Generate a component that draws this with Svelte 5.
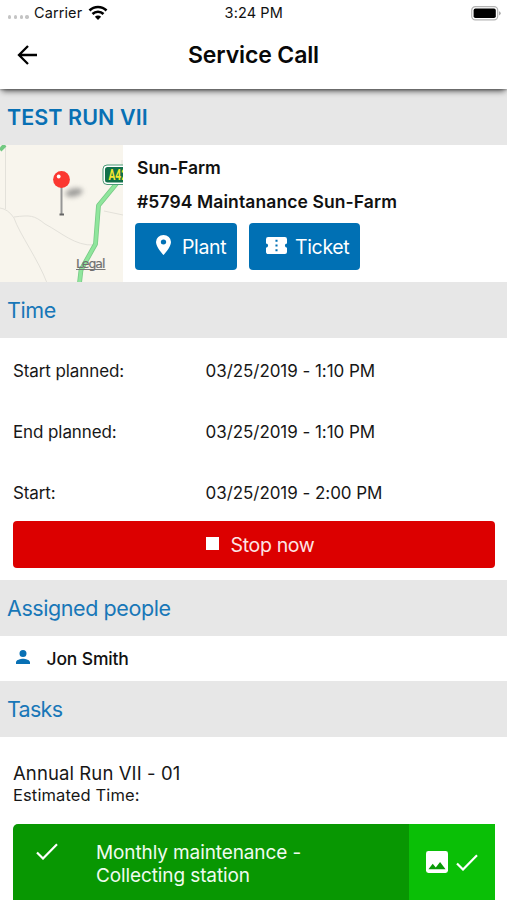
<script>
  const times = [
    { label: 'Start planned:', value: '03/25/2019 - 1:10 PM' },
    { label: 'End planned:', value: '03/25/2019 - 1:10 PM' },
    { label: 'Start:', value: '03/25/2019 - 2:00 PM' }
  ];
</script>

<main class="screen">
  <header class="top">
    <div class="status">
      <div class="carrier">
        <span class="dots"><i></i><i></i><i></i><i></i></span>
        <span class="carrier-name">Carrier</span>
        <svg class="wifi" width="20" height="16" viewBox="0 0 20 16">
          <path d="M1.5 5.5a12 12 0 0 1 17 0M4.5 9a7.8 7.8 0 0 1 11 0" fill="none" stroke="#000" stroke-width="2.6" />
          <path d="M6.9 11.7a4.3 4.3 0 0 1 6.2 0L10 15z" />
        </svg>
      </div>
      <span class="clock">3:24 PM</span>
      <svg class="battery" width="30" height="15" viewBox="0 0 30 15">
        <rect x=".7" y=".7" width="26" height="13.2" rx="3.6" fill="#fff" stroke="#b4b4b4" stroke-width="1.2" />
        <rect x="2.6" y="2.6" width="22.2" height="9.4" rx="1.8" />
        <path d="M28.2 5.2q1.4.6 1.4 2.1t-1.4 2.1z" fill="#999" />
      </svg>
    </div>
    <div class="nav">
      <svg class="back" width="22" height="20" viewBox="0 0 22 20">
        <path d="M11 1L2 10l9 9M2.2 10H20" fill="none" stroke="#000" stroke-width="2.3" />
      </svg>
      <h1>Service Call</h1>
    </div>
  </header>

  <h2 class="run">TEST RUN VII</h2>
  <section class="plant">
    <svg class="map" width="123" height="137" viewBox="0 0 123 137">
      <defs>
        <filter id="soft" x="-50%" y="-100%" width="200%" height="300%"><feGaussianBlur stdDeviation="2.6" /></filter>
      </defs>
      <rect width="123" height="138" fill="#f8f5ed" />
      <g fill="none" stroke="#e3e1da" stroke-width="1">
        <path d="M5.500 0V64M0 63Q8 64 14 73C20 90 38 114 47 138" />
        <path d="M14 72C30 70 34 70 45 79C62 88 75 101 94 100M104 66L123 70M122 15V20" />
      </g>
      <path d="M0 5L5 0" stroke="#72c982" stroke-width="4" />
      <path d="M117 38L98.500 60.500L95.500 99L81 125L79.500 138" fill="none" stroke="#79ca87" stroke-width="4.800" stroke-linejoin="round" />
      <path d="M117 38L98.500 60.500L95.500 99L81 125L79.500 138" fill="none" stroke="#8fe69c" stroke-width="3.200" stroke-linejoin="round" />
      <rect x="103" y="20" width="34" height="19.500" rx="4" fill="#fff" stroke="#4b9a77" stroke-width="1" />
      <rect x="105" y="22" width="32" height="15.500" rx="2.500" fill="#11704a" />
      <text x="108.500" y="34.500" class="road" textLength="18.500" lengthAdjust="spacingAndGlyphs">A42</text>
      <ellipse cx="74" cy="47.500" rx="9" ry="4" fill="#777" opacity=".7" filter="url(#soft)" transform="rotate(-12 74 47.500)" />
      <path d="M61.500 42V69" stroke="#969696" stroke-width="2" />
      <path d="M59.500 69.500h4.500" stroke="#666" stroke-width="2" />
      <circle cx="61.500" cy="34.500" r="8.400" fill="#fb3831" />
      <circle cx="58.700" cy="31.500" r="1.900" fill="#fff" />
      <text x="76" y="123" class="legal" textLength="29.500">Legal</text>
      <path d="M76 124.500h29.500" stroke="#777" />
    </svg>
    <div class="info">
      <p>Sun-Farm</p>
      <p class="number">#5794 Maintanance Sun-Farm</p>
      <div class="buttons">
        <button class="go plant-btn">
          <svg width="15" height="20" viewBox="0 0 14 20" preserveAspectRatio="none">
            <path d="M7 0a7 7 0 0 0-7 7c0 5.250 7 13 7 13s7-7.750 7-13a7 7 0 0 0-7-7zm0 9.500a2.500 2.500 0 1 1 0-5 2.500 2.500 0 0 1 0 5z" fill="#fff" />
          </svg>
          <span>Plant</span>
        </button>
        <button class="go ticket-btn">
          <svg width="21" height="17" viewBox="0 0 20 16" preserveAspectRatio="none">
            <path d="M20 6V2a2 2 0 0 0-2-2H2A2 2 0 0 0 0 2v4a2 2 0 0 1 0 4v4c0 1.100.9 2 2 2h16a2 2 0 0 0 2-2v-4a2 2 0 0 1 0-4zm-9 7.500H9v-2h2v2zm0-4.500H9V7h2v2zm0-4.500H9v-2h2v2z" fill="#fff" />
          </svg>
          <span>Ticket</span>
        </button>
      </div>
    </div>
  </section>

  <h2>Time</h2>
  <section class="time">
    {#each times as row}
      <div class="row"><span class="label">{row.label}</span><span class="value">{row.value}</span></div>
    {/each}
    <button class="stop"><i></i><span>Stop now</span></button>
  </section>

  <h2 class="people">Assigned people</h2>
  <section class="person">
    <svg width="14" height="14" viewBox="0 0 16 16">
      <path d="M8 8a4 4 0 1 0 0-8 4 4 0 0 0 0 8zm0 2c-2.670 0-8 1.340-8 4v2h16v-2c0-2.660-5.330-4-8-4z" fill="#0870b4" />
    </svg>
    <span>Jon Smith</span>
  </section>

  <h2 class="tasks-title">Tasks</h2>
  <section class="tasks">
    <p class="task-name">Annual Run VII - 01</p>
    <p class="estimate">Estimated Time:</p>
    <div class="task">
      <div class="task-main">
        <svg width="22" height="17" viewBox="0 0 22 17"><path d="M1 9.500l6 6L21 1.200" fill="none" stroke="#fff" stroke-width="2.200" /></svg>
        <span class="task-text">Monthly maintenance -<br />Collecting station</span>
      </div>
      <div class="task-side">
        <svg width="22" height="22" viewBox="0 0 18 18">
          <rect width="18" height="18" rx="2" fill="#fff" />
          <path d="M5.500 10.500l2.500 3.010L11.500 9l4.500 6H2z" fill="#0a9a06" />
        </svg>
        <svg width="22" height="17" viewBox="0 0 22 17"><path d="M1 9.500l6 6L21 1.200" fill="none" stroke="#fff" stroke-width="2.200" /></svg>
      </div>
    </div>
  </section>
</main>

<style>
  :global(body) { background: #fff; overflow: hidden; }
  * { box-sizing: border-box; }
  .screen { width: 507px; height: 900px; overflow: hidden; background: #fff; color: #171717; font-family: Inter, "Liberation Sans", sans-serif; white-space: nowrap; }
  h1, h2, p { margin: 0; }
  button { border: 0; padding: 0; font-family: inherit; color: #fff; }
  svg { display: block; flex: none; }
  .top { height: 89px; background: #fff; position: relative; box-shadow: 0 4px 6px -2px rgba(0, 0, 0, .65), 0 1px 2px rgba(0, 0, 0, .25); }
  .status { display: grid; grid-template-columns: 1fr auto 1fr; height: 26px; align-items: center; padding: 0 6px 0 8px; font-size: 14.5px; line-height: 26px; color: #111; }
  .carrier { display: flex; align-items: center; }
  .clock { letter-spacing: .1px; margin-left: -1.500px; }
  .carrier-name { letter-spacing: .1px; }
  .dots { display: flex; gap: 2.400px; width: 26px; padding-top: 8px; }
  .dots i { width: 3.400px; height: 3.400px; border-radius: 50%; background: #c4c4c4; }
  .wifi { margin-left: 5.500px; }
  .battery { justify-self: end; }
  .nav { height: 58px; display: grid; grid-template-columns: 1fr auto 1fr; align-items: center; }
  .back { margin-left: 17px; }
  h1 { font-size: 23px; font-weight: 600; color: #080808; letter-spacing: -.130px; line-height: 58px; }
  h2 { height: 56px; line-height: 56px; padding-left: 7px; background: #e7e7e7; color: #1877b8; font-size: 21.500px; font-weight: 400; letter-spacing: -.420px; }
  .run { font-weight: 600; font-size: 21.500px; line-height: 57px; color: #0870b4; letter-spacing: .060px; }
  .tasks-title { letter-spacing: -.700px; }
  .plant { display: flex; height: 137px; }
  .info { padding: 6px 0 0 13px; font-size: 17.500px; font-weight: 600; color: #111; }
  .info p { height: 34px; line-height: 34px; padding-left: 1px; }
  .info .number { letter-spacing: .100px; }
  .buttons { display: flex; gap: 12px; padding-top: 4px; margin-left: -1px; }
  .go { display: flex; align-items: center; height: 47px; border-radius: 4px; background: #0070b4; font-size: 19.500px; letter-spacing: -.350px; }
  .plant-btn { width: 102px; padding-left: 21px; gap: 11px; }
  .ticket-btn { width: 111px; padding-left: 17px; gap: 8px; }
  .go svg { margin-top: -3px; }
  .time { height: 242px; padding: 3px 13px 0; font-size: 17px; }
  .row { height: 61px; line-height: 61px; display: flex; }
  .label { width: 192.500px; letter-spacing: -.100px; }
  .value { letter-spacing: -.050px; }
  .stop { display: flex; align-items: center; justify-content: center; gap: 12px; width: 482px; height: 47px; margin-top: -3px; padding-left: 12px; border-radius: 4px; background: #dc0000; font-size: 19.500px; color: #fde4e4; letter-spacing: -.350px; }
  .stop i { width: 13px; height: 13px; background: #fff; margin-top: -3px; }
  .person { display: flex; align-items: center; height: 45px; padding-left: 16px; gap: 16.500px; font-size: 17.500px; font-weight: 500; color: #111; letter-spacing: -.150px; }
  .person svg { margin-top: -3px; }
  .tasks { padding: 25px 13px 0; }
  .task-name { font-size: 18.500px; line-height: 23px; letter-spacing: .100px; }
  .estimate { font-size: 16.500px; line-height: 21px; letter-spacing: .120px; }
  .task { display: flex; width: 482px; height: 90px; margin-top: 18px; border-radius: 5px 0 0 0; overflow: hidden; background: #089702; color: #effbef; }
  .task-main { display: flex; width: 396px; padding: 17px 0 0 23px; font-size: 19px; line-height: 23px; letter-spacing: -.110px; }
  .task-main svg { margin-top: 2px; margin-right: 38px; }
  .task-side { display: flex; width: 86px; height: 76px; align-items: center; padding-left: 17px; gap: 8px; background: #0abf06; }
  .road { font: bold 14px Roboto, sans-serif; fill: #f6e72e; }
  .legal { font: 12.500px "DejaVu Sans", sans-serif; fill: #6f6f6f; stroke: #6f6f6f; stroke-width: .200px; }
</style>
